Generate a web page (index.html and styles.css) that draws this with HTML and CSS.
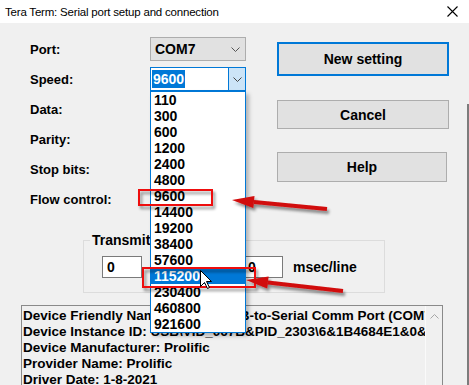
FILE: index.html
```html
<!DOCTYPE html>
<html lang="en">
<head>
    <meta charset="UTF-8">
    <title>Tera Term: Serial port setup and connection</title>
    <link rel="stylesheet" href="styles.css">
</head>
<body>
    <div class="window">
        <div class="titlebar">
            <span>Tera Term: Serial port setup and connection</span>
            <svg class="close" width="11" height="11" viewBox="0 0 11 11">
                <path d="M0.5 0.5 L10.5 10.5 M10.5 0.5 L0.5 10.5" stroke="#000" stroke-width="1.1" fill="none"/>
            </svg>
        </div>

        <div class="content">
            <div class="form">
                <label>Port:</label>
                <div class="combo">
                    <span>COM7</span>
                    <svg class="chev" width="9" height="5" viewBox="0 0 9 5"><path d="M0.5 0.5 L4.5 4.5 L8.5 0.5" stroke="#555" fill="none"/></svg>
                </div>

                <label>Speed:</label>
                <div class="combo combo-open">
                    <span class="sel">9600</span>
                    <span class="combo-btn">
                        <svg width="9" height="5" viewBox="0 0 9 5"><path d="M0.5 0.5 L4.5 4.5 L8.5 0.5" stroke="#444" fill="none"/></svg>
                    </span>
                </div>

                <label>Data:</label>
                <div></div>
                <label>Parity:</label>
                <div></div>
                <label>Stop bits:</label>
                <div></div>
                <label>Flow control:</label>
                <div></div>
            </div>

            <div class="buttons">
                <button class="btn btn-default">New setting</button>
                <button class="btn btn-cancel">Cancel</button>
                <button class="btn btn-help">Help</button>
            </div>
        </div>

        <fieldset class="delay">
            <legend>Transmit delay</legend>
            <div class="delay-row">
                <span class="field">0</span>
                <span class="unit unit-char">msec/char</span>
                <span class="field">0</span>
                <span class="unit">msec/line</span>
            </div>
        </fieldset>

        <div class="info">
            <div class="info-text">
                <div>Device Friendly Name: Prolific USB-to-Serial Comm Port (COM7)</div>
                <div>Device Instance ID: USB\VID_067B&amp;PID_2303\6&amp;1B4684E1&amp;0&amp;2</div>
                <div>Device Manufacturer: Prolific</div>
                <div>Provider Name: Prolific</div>
                <div>Driver Date: 1-8-2021</div>
                <div>Driver Version: 3.9.0.2</div>
            </div>
            <div class="scrollbar">
                <svg width="9" height="5" viewBox="0 0 9 5"><path d="M0.5 4.5 L4.5 0.5 L8.5 4.5" stroke="#a6a6a6" fill="none"/></svg>
            </div>
        </div>

        <!-- open speed list -->
        <ul class="speed-list">
            <li>110</li>
            <li>300</li>
            <li>600</li>
            <li>1200</li>
            <li>2400</li>
            <li>4800</li>
            <li>9600</li>
            <li>14400</li>
            <li>19200</li>
            <li>38400</li>
            <li>57600</li>
            <li class="hover">115200</li>
            <li>230400</li>
            <li>460800</li>
            <li>921600</li>
        </ul>

        <!-- red marks drawn on the screenshot -->
        <svg class="marks" width="469" height="385" viewBox="0 0 469 385">
            <defs>
                <filter id="shade" x="-20%" y="-40%" width="140%" height="200%">
                    <feGaussianBlur in="SourceAlpha" stdDeviation="1.5"/>
                    <feOffset dx="2" dy="3" result="b"/>
                    <feComponentTransfer><feFuncA type="linear" slope="0.45"/></feComponentTransfer>
                    <feMerge><feMergeNode/><feMergeNode in="SourceGraphic"/></feMerge>
                </filter>
            </defs>
            <g filter="url(#shade)">
                <rect x="139" y="190" width="73" height="15" fill="none" stroke="#ee1111" stroke-width="2"/>
                <polygon points="232,200 253.3,208.1 254.5,196.1" fill="#d10a0a"/>
                <polygon points="254.1,200.1 327.2,207 326.8,211 253.7,204.1" fill="#d10a0a"/>
            </g>
            <g filter="url(#shade)">
                <rect x="143" y="268" width="112" height="19" fill="none" stroke="#ee1111" stroke-width="2"/>
                <polygon points="246,280 267.2,288.5 268.6,276.5" fill="#d10a0a"/>
                <polygon points="268.1,280.5 343.2,289 342.8,293 267.7,284.5" fill="#d10a0a"/>
            </g>
            <path d="M200.5 270.5 L200.5 286.5 L204.5 282.5 L207.5 288.5 L209.5 287.5 L206.5 281.5 L211.5 281.5 Z" fill="#fff" stroke="#000" stroke-width="1"/>
        </svg>

        <div class="edge"></div>
    </div>
</body>
</html>
```

FILE: styles.css
```css
body {
    margin: 0;
    font-family: 'Liberation Sans', Arial, sans-serif;
    color: #000;
}

.window {
    position: relative;
    width: 469px;
    height: 385px;
    overflow: hidden;
    background: #f0f0f0;
}

.titlebar {
    height: 23px;
    background: #fff;
    display: flex;
    align-items: center;
    justify-content: space-between;
    padding: 0 11px 0 5px;
    font-size: 11.5px;
    letter-spacing: -0.2px;
}

.content {
    display: flex;
}

.form {
    width: 247px;
    padding: 11px 0 0 30px;
    display: grid;
    grid-template-columns: 120px 96px;
    grid-auto-rows: 30px;
    align-items: center;
    font-weight: bold;
    font-size: 13px;
}

.combo {
    height: 22px;
    border: 1px solid #adadad;
    background: #e1e1e1;
    display: flex;
    align-items: center;
    justify-content: space-between;
    padding-left: 4px;
    padding-right: 5px;
    font-size: 14px;
}

.combo-open {
    border-color: #0078d7;
    background: #fff;
    padding: 0 0 0 1px;
    align-items: stretch;
}

.combo-open .sel {
    background: #0078d7;
    color: #fff;
    margin: 2px 0;
    padding: 0 1px;
    display: flex;
    align-items: center;
}

.combo-btn {
    width: 16px;
    background: #cce4f7;
    border-left: 1px solid #0078d7;
    display: flex;
    align-items: center;
    justify-content: center;
}

.buttons {
    display: flex;
    flex-direction: column;
    align-items: flex-start;
    padding-top: 19px;
}

.btn {
    font-family: 'Liberation Sans', Arial, sans-serif;
    font-weight: bold;
    font-size: 14px;
    background: #e1e1e1;
    border: 1px solid #adadad;
    width: 172px;
    height: 30px;
    padding: 0;
    color: #000;
}

.btn-default {
    border: 2px solid #0078d7;
    height: 34px;
}

.btn-cancel {
    margin-top: 24px;
    height: 29px;
}

.btn-help {
    margin-top: 23px;
    width: 170px;
}

.delay {
    margin: 18px 0 0 83px;
    border: 1px solid #dcdcdc;
    padding: 8px 0 14px 18px;
    box-sizing: border-box;
    width: 302px;
    font-weight: bold;
    font-size: 13px;
}

.delay legend {
    padding: 0 2px;
    margin-left: -12px;
    line-height: 16px;
    font-size: 14px;
}

.delay-row {
    display: flex;
    align-items: center;
}

.field {
    width: 40px;
    height: 22px;
    box-sizing: border-box;
    border: 1px solid #7a7a7a;
    background: #fff;
    padding-left: 4px;
    line-height: 20px;
    font-size: 14px;
}

.unit {
    margin-left: 10px;
    font-size: 14px;
}

.unit-char {
    width: 91px;
}

.info {
    margin: 12px 0 0 21px;
    width: 422px;
    height: 110px;
    box-sizing: border-box;
    border: 1px solid #8a8a8a;
    display: flex;
    font-weight: bold;
    font-size: 13.5px;
}

.info-text {
    flex: 1;
    overflow: hidden;
    white-space: nowrap;
    padding: 2px 0 0 1px;
    line-height: 16px;
}

.scrollbar {
    width: 16px;
    border-left: 1px solid #fafafa;
    background: #f0f0f0;
    display: flex;
    justify-content: center;
    padding-top: 8px;
    align-items: flex-start;
}

.speed-list {
    position: absolute;
    left: 150px;
    top: 91px;
    width: 94px;
    margin: 0;
    padding: 0;
    list-style: none;
    background: #fff;
    border: 1px solid #0078d7;
    box-shadow: 3px 3px 4px rgba(0, 0, 0, 0.25);
    font-weight: bold;
    font-size: 14px;
}

.speed-list li {
    height: 16px;
    line-height: 16px;
    padding-left: 3px;
}

.speed-list li.hover {
    background: #0078d7;
    color: #fff;
}

.marks {
    position: absolute;
    left: 0;
    top: 0;
}

.edge {
    position: absolute;
    right: 0;
    top: 104px;
    width: 2px;
    height: 281px;
    background: #7c7c7c;
}
```
